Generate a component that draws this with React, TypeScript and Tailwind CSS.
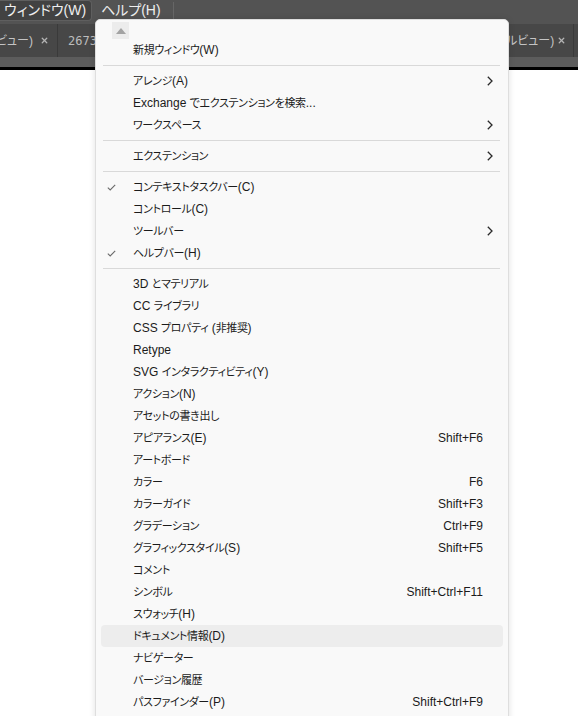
import React from 'react';
import { X } from 'lucide-react';

type Item = { label: string; shortcut?: string; sub?: boolean; checked?: boolean; active?: boolean };
type Entry = Item | 'sep';

const entries: Entry[] = [
  { label: '新規ウィンドウ(W)' },
  'sep',
  { label: 'アレンジ(A)', sub: true },
  { label: 'Exchange でエクステンションを検索...' },
  { label: 'ワークスペース', sub: true },
  'sep',
  { label: 'エクステンション', sub: true },
  'sep',
  { label: 'コンテキストタスクバー(C)', checked: true },
  { label: 'コントロール(C)' },
  { label: 'ツールバー', sub: true },
  { label: 'ヘルプバー(H)', checked: true },
  'sep',
  { label: '3D とマテリアル' },
  { label: 'CC ライブラリ' },
  { label: 'CSS プロパティ (非推奨)' },
  { label: 'Retype' },
  { label: 'SVG インタラクティビティ(Y)' },
  { label: 'アクション(N)' },
  { label: 'アセットの書き出し' },
  { label: 'アピアランス(E)', shortcut: 'Shift+F6' },
  { label: 'アートボード' },
  { label: 'カラー', shortcut: 'F6' },
  { label: 'カラーガイド', shortcut: 'Shift+F3' },
  { label: 'グラデーション', shortcut: 'Ctrl+F9' },
  { label: 'グラフィックスタイル(S)', shortcut: 'Shift+F5' },
  { label: 'コメント' },
  { label: 'シンボル', shortcut: 'Shift+Ctrl+F11' },
  { label: 'スウォッチ(H)' },
  { label: 'ドキュメント情報(D)', active: true },
  { label: 'ナビゲーター' },
  { label: 'バージョン履歴' },
  { label: 'パスファインダー(P)', shortcut: 'Shift+Ctrl+F9' },
];

// 和文部分だけ少し詰める（Windows の UI フォントは仮名が細い）
const Label = ({ text }: { text: string }) => {
  const parts = text.split(/([\u3000-\u30ff\u4e00-\u9fff]+)/).filter(Boolean);
  return (
    <>
      {parts.map((p, i) =>
        /[\u3000-\u30ff\u4e00-\u9fff]/.test(p) ? (
          <span key={i} className="text-[11px] tracking-[-0.35px]">
            {p}
          </span>
        ) : (
          <span key={i}>{p}</span>
        )
      )}
    </>
  );
};

const Check = () => (
  <svg width="9" height="7" viewBox="0 0 9 7" className="absolute left-[6px] top-[8px]">
    <path d="M0.8 3.6 L3.2 6 L8.2 0.8" fill="none" stroke="#6b6b6b" strokeWidth="1.1" />
  </svg>
);

const Chevron = () => (
  <svg width="6" height="10" viewBox="0 0 6 10">
    <path d="M0.8 0.8 L5 5 L0.8 9.2" fill="none" stroke="#2a2a2a" strokeWidth="1.3" />
  </svg>
);

const Row = ({ item }: { item: Item }) => (
  <div
    className={`relative mx-[5px] flex h-[22px] items-center rounded-[4px] pl-[32px] ${
      item.active ? 'bg-[#ededed]' : ''
    }`}
  >
    {item.checked && <Check />}
    <span className="flex-1 whitespace-nowrap">
      <Label text={item.label} />
    </span>
    {item.shortcut && <span className="whitespace-nowrap">{item.shortcut}</span>}
    <span className="flex w-[20px] items-center pl-[4px]">{item.sub && <Chevron />}</span>
  </div>
);

const TabClose = () => <X size={9} strokeWidth={3.5} color="#b4b4b4" />;

export default function App() {
  return (
    <div className="relative h-[716px] w-[578px] overflow-hidden bg-white [font-family:'Liberation_Sans','Noto_Sans_CJK_JP',sans-serif] [font-feature-settings:'palt']">
      {/* メニューバー */}
      <div className="flex h-[24px] items-start bg-[#535353] text-[14px] text-[#eeeeee]">
        <div className="flex h-[21px] w-[92px] items-center rounded-r-[4px] border border-l-0 border-[#5f5f5f] bg-[#424242] pl-[4px]">
          ウィンドウ(W)
        </div>
        <div className="flex h-[21px] items-center pl-[9px] pr-[12px]">ヘルプ(H)</div>
        <div className="mt-[2px] h-[18px] w-px bg-[#666666]" />
      </div>

      {/* タブバー */}
      <div className="flex h-[33px] items-stretch bg-[#474747] text-[12px] text-[#c4c4c4]">
        <div className="flex w-[58px] items-center justify-between border-r border-[#3a3a3a] pr-[8px]">
          <span className="-ml-[4px] whitespace-nowrap">ビュー)</span>
          <TabClose />
        </div>
        <div className="flex flex-1 items-center pl-[10px] font-['DejaVu_Sans_Mono',monospace] text-[#bdbdbd]">
          26735
        </div>
        <div className="flex w-[72px] items-center justify-between border-r border-[#3a3a3a] pl-[4px] pr-[7px]">
          <span className="whitespace-nowrap">ルビュー)</span>
          <TabClose />
        </div>
        <div className="w-[4px]" />
      </div>
      <div className="h-[10px] bg-[#5c5c5c]" />
      <div className="h-[3px] bg-black" />

      {/* ドロップダウン */}
      <div className="absolute left-[95px] top-[19px] h-[720px] w-[414px] rounded-t-[5px] border border-[#dedede] bg-[#f9f9f9] pt-[2px] text-[12px] text-[#1b1b1b] shadow-[0_0_6px_rgba(0,0,0,0.12)]">
        <div className="ml-[16px] flex h-[17px] w-[17px] items-center justify-center bg-[#ececec]">
          <svg width="10" height="6" viewBox="0 0 10 6">
            <path d="M0 6 L5 0 L10 6 Z" fill="#a3a3a3" />
          </svg>
        </div>
        {entries.map((e, i) =>
          e === 'sep' ? (
            <div key={i} className="flex h-[9px] items-center pl-[7px] pr-[8px]">
              <div className="h-px w-full bg-[#d9d9d9]" />
            </div>
          ) : (
            <Row key={i} item={e} />
          )
        )}
      </div>
    </div>
  );
}
